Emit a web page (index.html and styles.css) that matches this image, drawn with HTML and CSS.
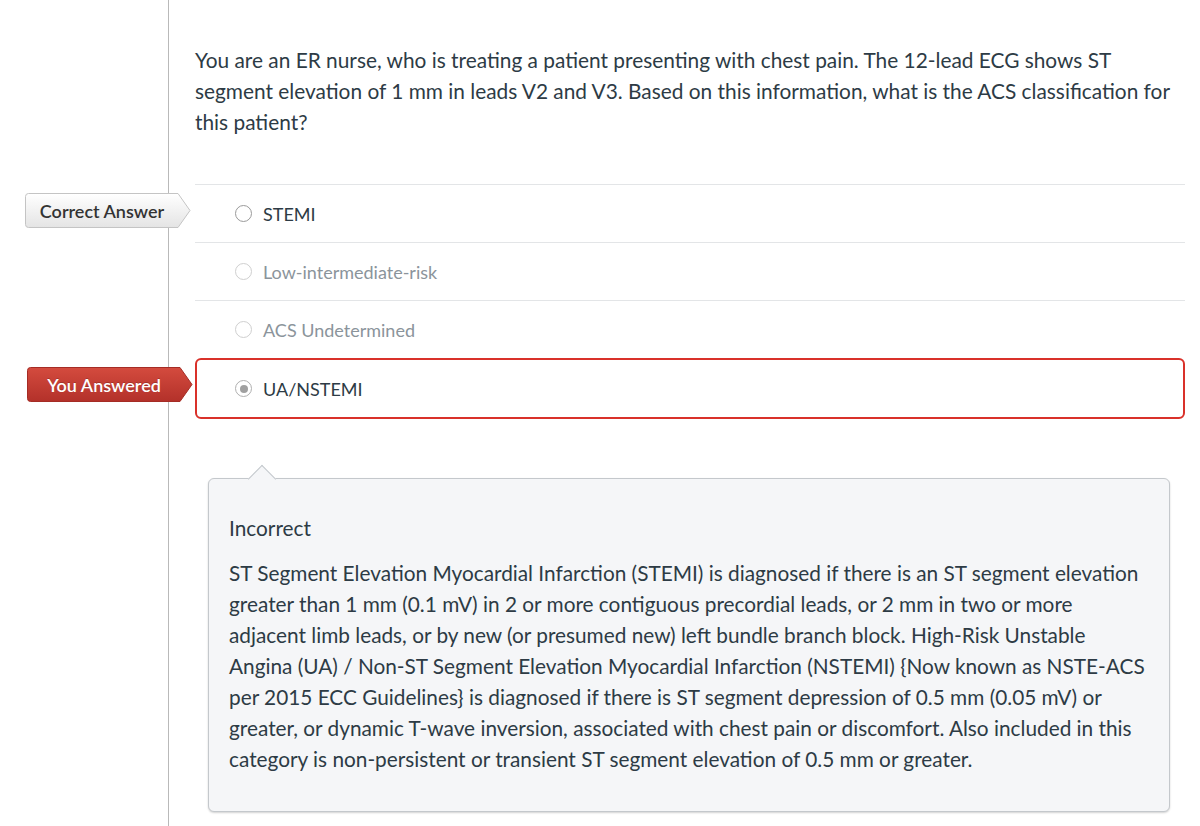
FILE: index.html
```html
<!DOCTYPE html>
<html lang="en">
<head>
<meta charset="utf-8">
<title>Quiz result</title>
<link rel="stylesheet" href="styles.css">
</head>
<body>
<div class="page">
  <div class="gutter"></div>
  <main class="main">
    <p class="question">You are an ER nurse, who is treating a patient presenting with chest pain. The 12-lead ECG shows ST segment elevation of 1 mm in leads V2 and V3. Based on this information, what is the ACS classification for this patient?</p>

    <div class="answers">
      <div class="answer">
        <div class="tag tag-correct">
          <svg class="tag-bg" width="166" height="35" viewBox="0 0 166 35">
            <defs>
              <linearGradient id="gGray" x1="0" y1="0" x2="0" y2="1">
                <stop offset="0" stop-color="#ffffff"/>
                <stop offset="1" stop-color="#e4e4e4"/>
              </linearGradient>
            </defs>
            <path d="M3.5,0.5 H153 L165,17.5 L153,34.5 H3.5 Q0.5,34.5 0.5,31.5 V3.5 Q0.5,0.5 3.5,0.5 Z" fill="url(#gGray)" stroke="#c4c4c4"/>
          </svg>
          <span class="tag-text">Correct Answer</span>
        </div>
        <span class="radio"></span>
        <span class="label">STEMI</span>
      </div>
      <div class="answer muted">
        <span class="radio"></span>
        <span class="label">Low-intermediate-risk</span>
      </div>
      <div class="answer muted last">
        <span class="radio"></span>
        <span class="label">ACS Undetermined</span>
      </div>
      <div class="answer selected">
        <div class="tag tag-wrong">
          <svg class="tag-bg" width="166" height="35" viewBox="0 0 166 35">
            <defs>
              <linearGradient id="gRed" x1="0" y1="0" x2="0" y2="1">
                <stop offset="0" stop-color="#d44b3e"/>
                <stop offset="1" stop-color="#b3312a"/>
              </linearGradient>
            </defs>
            <path d="M3.5,0.5 H153 L165,17.5 L153,34.5 H3.5 Q0.5,34.5 0.5,31.5 V3.5 Q0.5,0.5 3.5,0.5 Z" fill="url(#gRed)" stroke="#a52c25"/>
          </svg>
          <span class="tag-text">You Answered</span>
        </div>
        <span class="radio checked"></span>
        <span class="label">UA/NSTEMI</span>
      </div>
    </div>

    <div class="feedback">
      <p class="fb-title">Incorrect</p>
      <p class="fb-body">ST Segment Elevation Myocardial Infarction (STEMI) is diagnosed if there is an ST segment elevation greater than 1 mm (0.1 mV) in 2 or more contiguous precordial leads, or 2 mm in two or more adjacent limb leads, or by new (or presumed new) left bundle branch block. High-Risk Unstable Angina (UA) / Non-ST Segment Elevation Myocardial Infarction (NSTEMI) {Now known as NSTE-ACS per 2015 ECC Guidelines} is diagnosed if there is ST segment depression of 0.5 mm (0.05 mV) or greater, or dynamic T-wave inversion, associated with chest pain or discomfort. Also included in this category is non-persistent or transient ST segment elevation of 0.5 mm or greater.</p>
    </div>
  </main>
</div>
</body>
</html>
```

FILE: styles.css
```css
* { box-sizing: border-box; }

html, body {
  margin: 0;
  padding: 0;
  background: #ffffff;
}

body {
  font-family: Lato, "Open Sans", "Liberation Sans", sans-serif;
  color: #2d3b45;
  overflow: hidden;
}

.page {
  display: flex;
  min-height: 826px;
}

.gutter {
  width: 169px;
  flex: none;
  border-right: 1px solid #b9b9b9;
}

.main {
  flex: 1;
  padding: 44px 15px 0 26px;
}

.question {
  margin: 0;
  font-size: 20.85px;
  line-height: 31px;
  color: #2d3b45;
  padding-right: 6px;
}

.answers {
  margin-top: 47px;
  border-top: 1px solid #e3e5e7;
}

.answer {
  position: relative;
  display: flex;
  align-items: center;
  height: 58px;
  padding-left: 40px;
  border-bottom: 1px solid #e3e5e7;
  font-size: 18px;
}

.answer.last {
  border-bottom: none;
  height: 57px;
}

.answer.selected {
  height: 61px;
  border: 2px solid #d9312a;
  border-radius: 6px;
  padding-left: 38px;
}

.radio {
  width: 17px;
  height: 17px;
  border-radius: 50%;
  border: 1.5px solid #9a9a9a;
  background: #fff;
  flex: none;
  margin-right: 11px;
  position: relative;
}

.muted .radio {
  border-color: #cfcfcf;
}

.radio.checked {
  border-color: #b0b0b0;
}

.radio.checked::after {
  content: "";
  position: absolute;
  left: 50%;
  top: 50%;
  width: 8px;
  height: 8px;
  margin: -4px 0 0 -4px;
  border-radius: 50%;
  background: #a0a0a0;
}

.label {
  line-height: 1;
}

.muted .label {
  color: #8b949b;
}

.tag {
  position: absolute;
  left: -170px;
  top: 8px;
  width: 166px;
  height: 35px;
}

.tag-wrong {
  left: -170px;
  top: 7px;
}

.tag-bg {
  position: absolute;
  left: 0;
  top: 0;
  display: block;
}

.tag-text {
  position: relative;
  display: flex;
  align-items: center;
  justify-content: center;
  width: 154px;
  height: 35px;
  font-size: 18px;
  font-weight: 600;
}

.tag-correct .tag-text {
  color: #333333;
}

.tag-wrong .tag-text {
  color: #ffffff;
  text-shadow: 0 -1px 0 rgba(0,0,0,0.2);
}

.feedback {
  position: relative;
  margin: 59px 15px 0 13px;
  padding: 33px 20px 37px 20px;
  background: #f5f6f8;
  border: 1px solid #c4c8cc;
  border-radius: 6px;
  box-shadow: 0 1px 2px rgba(0,0,0,0.18);
}

.feedback::before {
  content: "";
  position: absolute;
  top: -10px;
  left: 43px;
  width: 19px;
  height: 19px;
  background: #f5f6f8;
  border-top: 1px solid #c4c8cc;
  border-left: 1px solid #c4c8cc;
  transform: rotate(45deg);
}

.fb-title {
  margin: 0 0 14px 0;
  font-size: 20.8px;
  line-height: 31px;
}

.fb-body {
  margin: 0;
  font-size: 20.8px;
  line-height: 31px;
}
```
